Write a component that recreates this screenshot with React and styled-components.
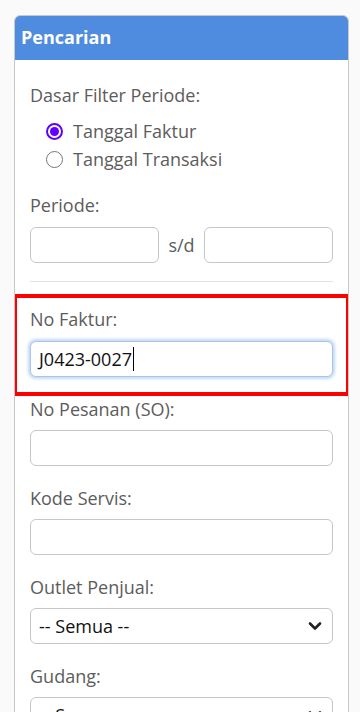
import React from 'react';
import styled, { createGlobalStyle } from 'styled-components';

const GlobalStyle = createGlobalStyle`
  * { box-sizing: border-box; }
  body {
    margin: 0;
    background: #fafafa;
    font-family: 'Open Sans', 'Noto Sans', sans-serif;
    color: #5a5a5a;
  }
`;

const Page = styled.div`
  padding: 15px 11px 0 14px;
  height: 712px;
  overflow: hidden;
`;

const Card = styled.div`
  background: #fff;
  border: 1px solid #c8c8c8;
  border-radius: 6px;
  overflow: hidden;
`;

const CardHeader = styled.div`
  height: 45px;
  background: #4f8bde;
  color: #fff;
  font-weight: 700;
  font-size: 18px;
  display: flex;
  align-items: center;
  padding: 0 7px 2px;
  margin: -1px -1px 0;
`;

const CardBody = styled.div`
  padding: 23px 15px 0;
`;

const Label = styled.div`
  font-size: 18px;
  line-height: 24px;
  color: #5c5c5c;
  margin-bottom: ${(p) => p.gap || 10}px;
`;

const RadioList = styled.div`
  padding-left: 16px;
  margin-bottom: 20px;
`;

const RadioRow = styled.label`
  display: flex;
  align-items: center;
  gap: 10px;
  height: 28px;
  font-size: 18px;
  color: #5c5c5c;
`;

const RadioDot = styled.span`
  width: 17px;
  height: 17px;
  border-radius: 50%;
  border: ${(p) => (p.checked ? '2px solid #6200ff' : '1.5px solid #777')};
  background: #fff;
  display: flex;
  align-items: center;
  justify-content: center;

  &::after {
    content: '';
    width: 9px;
    height: 9px;
    border-radius: 50%;
    background: ${(p) => (p.checked ? '#6200ff' : 'transparent')};
  }
`;

const RangeRow = styled.div`
  display: flex;
  align-items: center;
  gap: 9px;
`;

const Input = styled.div`
  flex: 1;
  height: 36px;
  border: 1px solid #c6c6c6;
  border-radius: 6px;
  background: #fff;
  display: flex;
  align-items: center;
  padding: 0 8px;
  font-size: 18px;
  color: #111;
  box-shadow: ${(p) => (p.focused ? '0 0 3px 2px rgba(120, 170, 230, 0.45)' : 'none')};
  border-color: ${(p) => (p.focused ? '#a9c6ea' : '#c6c6c6')};
`;

const Caret = styled.span`
  width: 1px;
  height: 24px;
  background: #000;
  margin-left: 1px;
`;

const Sd = styled.span`
  font-size: 18px;
  color: #5c5c5c;
`;

const Divider = styled.hr`
  border: 0;
  border-top: 1px solid #e3e3e3;
  margin: 18px 0 12px;
`;

const Highlight = styled.div`
  margin: 0 -17px 1px;
  border: 4px solid #ff0000;
  padding: 9px 13px 15px;
`;

const Field = styled.div`
  margin-bottom: ${(p) => (p.last ? 0 : 20)}px;
`;

const Select = styled(Input)`
  justify-content: space-between;
  padding-right: 10px;
`;

const Chevron = () => (
  <svg width="14" height="10" viewBox="0 0 14 10">
    <path d="M2 2.5 L7 7.5 L12 2.5" fill="none" stroke="#222" strokeWidth="2.6" strokeLinecap="round" strokeLinejoin="round" />
  </svg>
);

export default function App() {
  return (
    <>
      <GlobalStyle />
      <Page>
        <Card>
          <CardHeader>Pencarian</CardHeader>
          <CardBody>
            <Label>Dasar Filter Periode:</Label>
            <RadioList>
              <RadioRow>
                <RadioDot checked />
                Tanggal Faktur
              </RadioRow>
              <RadioRow>
                <RadioDot />
                Tanggal Transaksi
              </RadioRow>
            </RadioList>

            <Label>Periode:</Label>
            <RangeRow>
              <Input />
              <Sd>s/d</Sd>
              <Input />
            </RangeRow>
            <Divider />

            <Highlight>
              <Label>No Faktur:</Label>
              <Input focused>
                J0423-0027
                <Caret />
              </Input>
            </Highlight>

            <Field>
              <Label gap={9}>No Pesanan (SO):</Label>
              <Input />
            </Field>
            <Field>
              <Label gap={9}>Kode Servis:</Label>
              <Input />
            </Field>
            <Field>
              <Label gap={9}>Outlet Penjual:</Label>
              <Select>
                -- Semua --
                <Chevron />
              </Select>
            </Field>
            <Field last>
              <Label gap={9}>Gudang:</Label>
              <Select>
                -- Semua --
                <Chevron />
              </Select>
            </Field>
          </CardBody>
        </Card>
      </Page>
    </>
  );
}
